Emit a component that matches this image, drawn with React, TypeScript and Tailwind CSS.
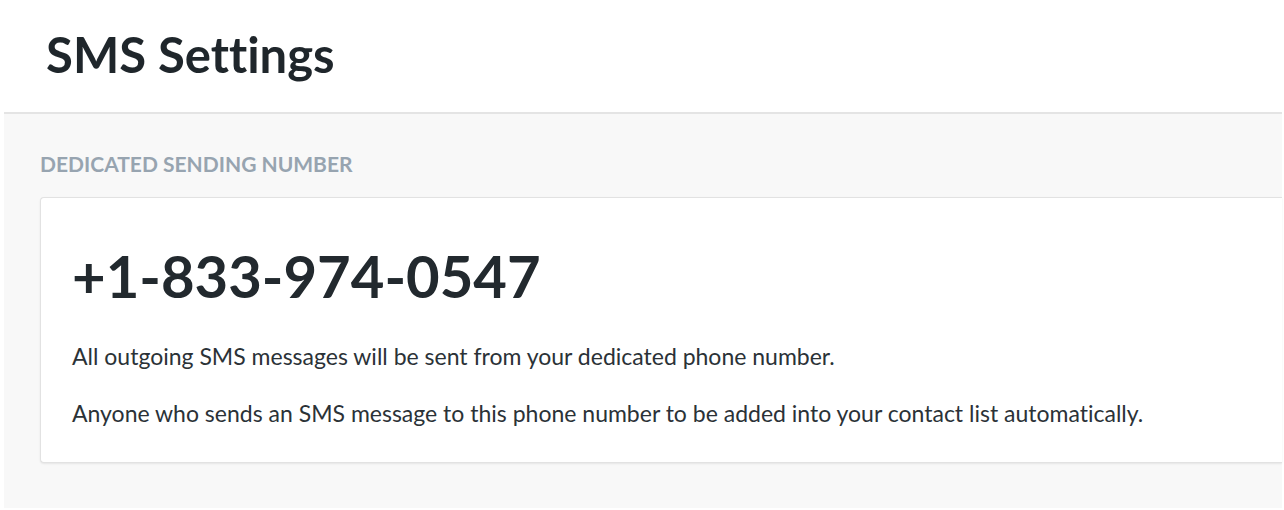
const App = () => {
  return (
    <div className="h-[510px] w-full overflow-hidden bg-white font-['Lato','Liberation_Sans',sans-serif] [font-variant-ligatures:none]">
      <div className="h-[112px] pl-[46px] pt-[24px]">
        <h1 className="text-[49px] font-bold leading-[60px] text-[#1f262b]">SMS Settings</h1>
      </div>
      <div className="ml-[4px] h-[396px] w-[1278px] border-t-2 border-[#e4e4e4] bg-[#f8f8f8] pl-[36px] pt-[38px]">
        <p className="text-[21px] font-bold leading-[24px] text-[#97a4b0]">DEDICATED SENDING NUMBER</p>
        <div className="mt-[21px] h-[266px] rounded-l-[4px] border border-r-0 border-[#e2e2e2] bg-white pl-[31px] pt-[42px] shadow-[0_1px_2px_rgba(0,0,0,0.08)]">
          <p className="text-[58px] font-bold leading-[72px] text-[#22292e]">+1-833-974-0547</p>
          <p className="mt-[29px] text-[23px] leading-[30px] text-[#2b3237]">
            All outgoing SMS messages will be sent from your dedicated phone number.
          </p>
          <p className="mt-[27px] text-[23px] leading-[30px] text-[#2b3237]">
            Anyone who sends an SMS message to this phone number to be added into your contact list automatically.
          </p>
        </div>
      </div>
    </div>
  );
};

export default App;
